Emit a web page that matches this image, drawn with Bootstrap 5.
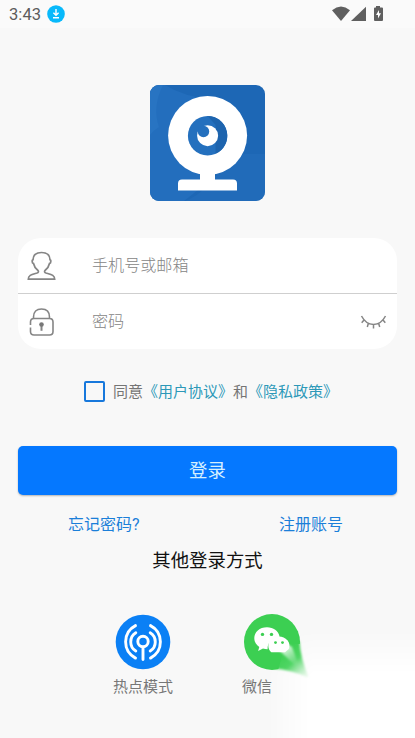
<!DOCTYPE html>
<html lang="zh-CN">
<head>
<meta charset="utf-8">
<meta name="viewport" content="width=device-width, initial-scale=1">
<title>登录</title>
<link rel="stylesheet" href="https://cdn.jsdelivr.net/npm/bootstrap@5.3.0/dist/css/bootstrap.min.css">
<style>
  body{background:#f8f8f8;font-family:Roboto,"Noto Sans CJK SC",sans-serif;font-size:16px;line-height:24px;color:#777;height:738px;overflow:hidden}
  svg{display:block;flex:none}
  .screen{width:415px;height:738px;overflow:hidden}
  .status{height:28px;background:#fafafa;padding:0 31px 0 9px;color:#5c5c5c}
  .clock{font-size:16.5px;letter-spacing:.1px;padding-top:1px}
  .logo{margin-top:57px}
  .panel{margin:37px 18px 0;height:111px;border-radius:23px;background:#fff}
  .field{height:55px;padding:0 10px 0 9px}
  .field+.field{border-top:1px solid #cfcfcf;height:56px}
  .field .form-control{font-size:16.1px;color:#555;padding:0;margin-left:36px;font-weight:300;height:30px}
  .field .form-control::placeholder{color:#858585;opacity:1}
  .agree{margin:30px 0 0 84px;height:24px;font-size:15px;color:#757575}
  .agree .form-check-input{width:21px;height:21px;margin:0 8px 0 0;border:2px solid #1778dc;border-radius:2px;background:transparent}
  .agree div{padding-top:1px}
  .agree a{color:#2d98b8}
  .login{margin:43px 18px 0;height:49px;background:#0578ff;border:0;border-radius:5px;font-size:18.4px;color:#d5f0ff;box-shadow:0 1px 2px rgba(0,0,0,.28)}
  .links{padding:0 72px 0 68px;margin-top:18px}
  .links a{color:#1b7fd9}
  .other{font-size:18.4px;color:#111;margin-top:12px}
  .methods{margin-top:40px;font-size:15px}
  .hot{margin-left:113px;width:60px}
  .wechat{margin-left:69px;width:173px}
  .methods span{margin-top:4px}
  .glow{width:150px;height:110px;right:0;bottom:0;z-index:-1;background:#fff;-webkit-mask-image:linear-gradient(90deg,transparent,#000 32%),linear-gradient(180deg,transparent,#000 45%);-webkit-mask-composite:source-in;mask-composite:intersect}
</style>
</head>
<body>
<main class="screen position-relative d-flex flex-column">
  <div class="glow position-absolute"></div>
  <header class="status d-flex align-items-center flex-shrink-0">
    <span class="clock">3:43</span>
    <svg class="ms-1" width="20" height="18" viewBox="-2 0 20 18"><circle cx="9" cy="9" r="8.800" fill="#08b9fb"/><path d="M9 4v6M6.400 7.800 9 10.300l2.600-2.500M6 12.800h6" fill="none" stroke="#fff" stroke-width="1.400"/></svg>
    <svg class="ms-auto" width="52" height="16" viewBox="0 0 52 16" fill="#5f5f5f"><path d="M0 4.300Q9-3.100 18 4.300L9 15Z"/><path d="M34 .7V15H19Z"/><path d="M44 0h4v1.400h2q1 0 1 1V14q0 1-1 1h-7q-1 0-1-1V2.400q0-1 1-1h1Z"/><path d="M47 4v3.200h2l-3 5.300V9h-2Z" fill="#fff"/></svg>
  </header>

  <svg class="logo align-self-center" width="115" height="116" viewBox="0 0 115 116">
    <defs><clipPath id="tile"><rect width="115" height="116" rx="9"/></clipPath></defs>
    <g clip-path="url(#tile)"><path fill="#1d67b5" d="M0 0h116v116H0z"/><path fill="#236ebd" d="M0 0h15Q34 12 62 14L72 69 48 105 34 116H0Z"/><path fill="#2874c2" d="M0 0h13Q2 22 9 42 4 45 0 50Z"/><path fill="#2470bc" d="M80 69h36v47H35Q58 108 80 69Z" opacity=".55"/></g>
    <circle cx="57.600" cy="50.500" r="39.500" fill="#fff"/><path fill="#fff" d="M50 86h15v8.500h18q4 0 4 4v7H28v-7q0-4 4-4h18Z"/>
    <circle cx="57.600" cy="50.800" r="19.700" fill="#2470be"/><path d="M57.600 31.100a19.700 19.700 0 0 1 8 37.700V40Z" fill="#1d64ae"/>
    <circle cx="57.600" cy="50.700" r="10.500" fill="#fff"/><circle cx="53.500" cy="46.500" r="5.700" fill="#2470be"/>
  </svg>

  <form class="d-flex flex-column">
    <div class="panel">
      <div class="field d-flex align-items-center">
        <svg width="29" height="30" viewBox="0 0 29 30" fill="none" stroke="#858585" stroke-width="1.700"><path d="M11 19.500C8.500 17.500 7 15 6.500 12.500Q4.800 12 5.300 9.200L6 8.800C6 4 9 1.500 14.500 1.500S23 4 23 8.800L23.700 9.200Q24.200 12 22.500 12.500C22 15 20.500 17.500 18 19.500 17.200 20.500 17.500 21.500 19 22 24 23.500 27.700 24 27.700 28.200H1.300C1.300 24 5 23.500 10 22 11.500 21.500 11.800 20.500 11 19.500Z"/></svg>
        <input class="form-control border-0 bg-transparent shadow-none" type="text" placeholder="手机号或邮箱">
      </div>
      <div class="field d-flex align-items-center">
        <svg width="29" height="30" viewBox="0 0 29 30" fill="none" stroke="#858585" stroke-width="1.600"><path d="M6.500 11.500V10C6.500 5 9.500 2 14.500 2s8 3 8 8v1.500M3.500 18v-3q0-3.500 3.500-3.500h15.500q3.500 0 3.500 3.500v9.500q0 3.500-3.500 3.500H7q-3.500 0-3.500-3.500V20.500"/><path d="M14.500 18v5.800" stroke-width="2"/><circle cx="14.500" cy="17.500" r="2.300" fill="#777" stroke="none"/></svg>
        <input class="form-control border-0 bg-transparent shadow-none" type="password" placeholder="密码">
        <svg width="27" height="16" viewBox="0 0 27 16" fill="none" stroke="#858585" stroke-width="1.500"><path d="M1.500 2Q6 10.500 13.500 10.500T25.500 2M4 6 1.700 8.800M8.300 9.500 7.300 13M13.500 10.500v4M18.700 9.500l1 3.500M23 6l2.300 2.800"/></svg>
      </div>
    </div>
    <div class="agree d-flex align-items-center text-nowrap">
      <input class="form-check-input" type="checkbox" id="ok" aria-label="同意">
      <div>同意<a class="text-decoration-none" href="#">《用户协议》</a>和<a class="text-decoration-none" href="#">《隐私政策》</a></div>
    </div>
    <button class="btn login d-flex align-items-center justify-content-center" type="button">登录</button>
  </form>
  <div class="links d-flex justify-content-between"><a class="text-decoration-none" href="#">忘记密码?</a><a class="text-decoration-none" href="#">注册账号</a></div>
  <div class="other text-center">其他登录方式</div>

  <div class="methods d-flex">
    <div class="hot d-flex flex-column align-items-center text-nowrap">
      <svg width="58" height="58" viewBox="0 0 58 58"><circle cx="29" cy="29" r="27.300" fill="#0b80f5"/><g fill="none" stroke="#fff" stroke-width="2.900" stroke-linecap="round"><circle cx="29" cy="28.500" r="5.200"/><path d="M29 34.500v12M21.800 19.800a10.700 10.700 0 0 0 0 18.200M36.200 19.800a10.700 10.700 0 0 1 0 18.200M21.500 12.600a18.300 18.300 0 0 0 0 32.500M36.500 12.600a18.300 18.300 0 0 1 0 32.500"/></g></svg>
      <span>热点模式</span>
    </div>
    <div class="wechat d-flex flex-column align-items-start">
      <svg width="90" height="58" viewBox="0 0 90 58" overflow="visible">
        <defs>
          <filter id="soft" x="-30%" y="-30%" width="160%" height="160%"><feGaussianBlur stdDeviation="1.200"/></filter>
          <linearGradient id="tail" gradientUnits="userSpaceOnUse" x1="42" y1="38" x2="66" y2="65"><stop stop-color="#3ccf52"/><stop offset=".4" stop-color="#4fd564"/><stop offset="1" stop-color="#a5eab0" stop-opacity=".1"/></linearGradient>
          <linearGradient id="pale" gradientUnits="userSpaceOnUse" x1="40" y1="34" x2="56" y2="56"><stop stop-color="#fff"/><stop offset="1" stop-color="#8be39a" stop-opacity="0"/></linearGradient>
          <clipPath id="keep"><path d="M0 0h60v31H48L40 42 36 58H0Z"/></clipPath>
        </defs>
        <path d="M46 28H57.500Q58.500 46 67 65 50 56.500 31 55.500L36 38Z" fill="url(#tail)" filter="url(#soft)"/>
        <circle cx="30" cy="29" r="28" fill="#3ccf52" clip-path="url(#keep)"/>
        <path d="M25 14.200C17.500 14.200 12.300 19 12.300 25.200c0 3.800 2 6.800 5 8.800l-1.200 4 4.900-2.500q3 1 7 .5C33 36 37 30 37.500 23.200 36.300 17.800 31.500 14.200 25 14.200Z" fill="#fff"/>
        <path d="M27 40.500A11.700 10.800 0 1 1 47.800 30L46 39Z" fill="#3ccf52"/>
        <path d="M46.500 32 50 34 59 58 38 38Z" fill="url(#pale)" filter="url(#soft)"/>
        <path d="M37 23.600c-6 0-10.700 4-10.700 9.200 0 2.600 1.200 4.900 3 6.500H43L46.800 36C49.500 29.500 43.500 23.600 37 23.600Z" fill="#fff"/>
        <g fill="#3ccf52"><circle cx="20.500" cy="21.400" r="1.700"/><circle cx="29.500" cy="21.400" r="1.700"/><circle cx="33.500" cy="29.600" r="1.400"/><circle cx="40.500" cy="29.600" r="1.400"/></g>
      </svg>
      <span>微信</span>
    </div>
  </div>
</main>
<script src="https://cdn.jsdelivr.net/npm/bootstrap@5.3.0/dist/js/bootstrap.bundle.min.js"></script>
</body>
</html>
